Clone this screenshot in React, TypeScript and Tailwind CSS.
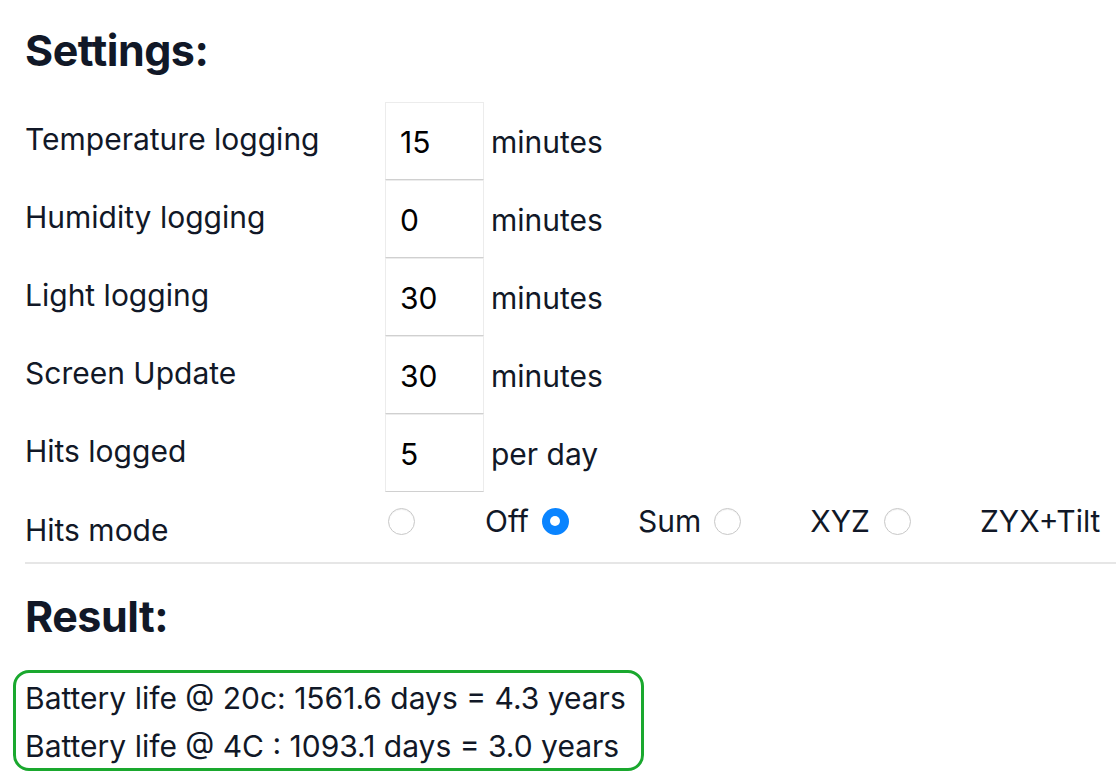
import React from "react";

const font = { fontFamily: "Inter, 'Noto Sans', sans-serif" };

const settings = [
  { label: "Temperature logging", value: "15", unit: "minutes" },
  { label: "Humidity logging", value: "0", unit: "minutes" },
  { label: "Light logging", value: "30", unit: "minutes" },
  { label: "Screen Update", value: "30", unit: "minutes" },
  { label: "Hits logged", value: "5", unit: "per day" },
];

function Radio({ checked }: { checked?: boolean }) {
  if (checked) {
    return (
      <span className="flex h-[27px] w-[27px] shrink-0 items-center justify-center rounded-full bg-[#0a84ff]">
        <span className="block h-[10px] w-[10px] rounded-full bg-white" />
      </span>
    );
  }
  return (
    <span className="block h-[27px] w-[27px] shrink-0 rounded-full border border-[#c8c8c8] bg-white shadow-[inset_0_1px_1px_rgba(0,0,0,0.06)]" />
  );
}

export default function App() {
  return (
    <div className="min-h-[780px] bg-white pl-[25px] pt-[22px] text-[#111827]" style={font}>
      <h2 className="text-[43px] font-bold leading-[56px] tracking-[-0.5px]">Settings:</h2>

      <div className="mt-[24px]">
        {settings.map((s) => (
          <div key={s.label} className="flex h-[78px] items-center">
            <div className="w-[360px] pb-[3px] text-[30px]">{s.label}</div>
            <div className="flex h-[78px] w-[99px] items-center border-x border-t border-x-[#ececec] border-t-[#ececec] border-b border-b-[#d0d0d0] pl-[14px] pt-[2px] text-[30px] text-black">
              {s.value}
            </div>
            <div className="pl-[7px] pt-[3px] text-[30px]">{s.unit}</div>
          </div>
        ))}

        <div className="flex h-[70px]">
          <div className="w-[363px] pt-[16px] text-[30px]">Hits mode</div>
          <div className="flex items-center pb-[12px] text-[30px]">
            <Radio />
            <span className="ml-[70px]">Off</span>
            <span className="ml-[13px] flex"><Radio checked /></span>
            <span className="ml-[69px]">Sum</span>
            <span className="ml-[13px] flex"><Radio /></span>
            <span className="ml-[69px]">XYZ</span>
            <span className="ml-[14px] flex"><Radio /></span>
            <span className="ml-[69px]">ZYX+Tilt</span>
          </div>
        </div>
      </div>

      <div className="h-[2px] bg-[#e6e6e6]" />

      <h2 className="mt-[24px] text-[43px] font-bold leading-[56px] tracking-[-0.5px]">Result:</h2>

      <div className="-ml-[12px] mt-[26px] w-[631px] rounded-[16px] border-[3px] border-[#1aa82e] pl-[9px] text-[30px]">
        <div className="flex h-[49px] items-center pt-[2px]">Battery life @ 20c: 1561.6 days = 4.3 years</div>
        <div className="flex h-[46px] items-center pt-[2px]">Battery life @ 4C : 1093.1 days = 3.0 years</div>
      </div>
    </div>
  );
}
